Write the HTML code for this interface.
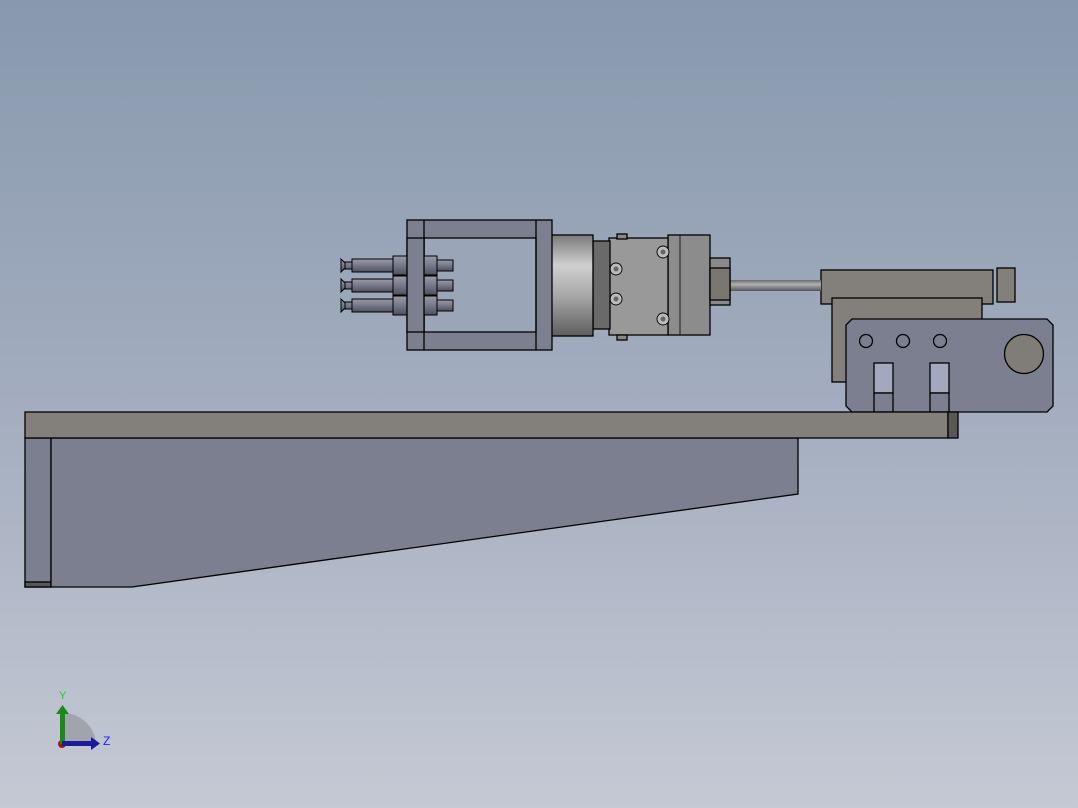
<!DOCTYPE html>
<html><head><style>
html,body{margin:0;padding:0;width:1078px;height:808px;overflow:hidden}
svg{display:block}
</style></head><body>
<svg width="1078" height="808" viewBox="0 0 1078 808" xmlns="http://www.w3.org/2000/svg">
<defs>
<linearGradient id="bg" x1="0" y1="0" x2="0" y2="1">
<stop offset="0" stop-color="#8899ad"/><stop offset="0.5" stop-color="#a3adbf"/><stop offset="1" stop-color="#c5c9d4"/>
</linearGradient>
<linearGradient id="cyl" x1="0" y1="0" x2="0" y2="1">
<stop offset="0" stop-color="#7a7a7a"/><stop offset="0.3" stop-color="#d0d0d0"/><stop offset="0.6" stop-color="#a8a8a8"/><stop offset="1" stop-color="#5e5e5e"/>
</linearGradient>
<linearGradient id="rod" x1="0" y1="0" x2="0" y2="1">
<stop offset="0" stop-color="#9a9aa8"/><stop offset="0.4" stop-color="#7d8090"/><stop offset="1" stop-color="#4e5060"/>
</linearGradient>
<linearGradient id="prod" x1="0" y1="0" x2="0" y2="1">
<stop offset="0" stop-color="#6a6a6a"/><stop offset="0.4" stop-color="#b0b0b0"/><stop offset="1" stop-color="#555"/>
</linearGradient>
</defs>
<rect width="1078" height="808" fill="url(#bg)"/>
<g stroke="#000" stroke-width="1.3">
<!-- base -->
<rect x="25" y="438" width="26" height="149" fill="#7b7f90"/>
<rect x="25" y="582" width="26" height="5" fill="#55575f"/>
<path d="M51 438 H798 V494 L132 587 H51 Z" fill="#7b7f90"/>
<!-- bracket back plates -->
<rect x="821" y="270" width="172" height="34" fill="#837f7a"/>
<rect x="997" y="268" width="18" height="34" fill="#837f7a"/>
<rect x="832" y="298" width="150" height="84" fill="#837f7a"/>
<path d="M852 319 H1047 L1053 325 V406 L1047 412 H852 L846 406 V325 Z" fill="#7b7f90"/>
<circle cx="866" cy="341" r="6.5" fill="#7b7f90"/>
<circle cx="903" cy="341" r="6.5" fill="#7b7f90"/>
<circle cx="940" cy="341" r="6.5" fill="#7b7f90"/>
<circle cx="1024" cy="354" r="19.5" fill="#807d77"/>
<rect x="874" y="363" width="19" height="30" fill="#a3a8bf"/>
<rect x="874" y="393" width="19" height="19" fill="#7b7f90"/>
<rect x="930" y="363" width="19" height="30" fill="#a3a8bf"/>
<rect x="930" y="393" width="19" height="19" fill="#7b7f90"/>
<!-- top plate -->
<rect x="25" y="412" width="923" height="26" fill="#837f7a"/>
<rect x="948" y="412" width="10" height="26" fill="#5a5855"/>
<!-- rod -->
<rect x="730" y="280" width="91" height="11" fill="url(#prod)" stroke="none"/>
<!-- end block -->
<rect x="668" y="235" width="42" height="100" fill="#8c8c8c"/>
<line x1="680" y1="235" x2="680" y2="335" stroke-width="0.8"/>
<rect x="710" y="258" width="20" height="47" fill="#8a8a8a"/>
<rect x="710" y="268" width="20" height="32" fill="#7a7670"/>
<!-- gripper -->
<rect x="609" y="238" width="59" height="97" fill="#999"/>
<rect x="617" y="234" width="10" height="5" fill="#888"/>
<rect x="617" y="335" width="10" height="5" fill="#888"/>
<g fill="#bbb" stroke-width="0.9">
<circle cx="616" cy="269" r="6"/><circle cx="616" cy="299" r="6"/>
<circle cx="663" cy="252" r="6"/><circle cx="663" cy="319" r="6"/>
</g>
<g fill="#666" stroke="none">
<circle cx="616" cy="269" r="2.5"/><circle cx="616" cy="299" r="2.5"/>
<circle cx="663" cy="252" r="2.5"/><circle cx="663" cy="319" r="2.5"/>
</g>
<!-- cylinder -->
<rect x="593" y="241" width="17" height="88" fill="#6a6a6a"/>
<rect x="548" y="235" width="45" height="101" fill="url(#cyl)"/>
<!-- frame -->
<rect x="407" y="220" width="145" height="130" fill="#7b7f90"/>
<rect x="424" y="238" width="112" height="94" fill="#9aa5b8"/>
<line x1="424" y1="220" x2="424" y2="350"/>
<line x1="536" y1="220" x2="536" y2="350"/>
<!-- suction rods -->
<g fill="url(#rod)" stroke-width="1">
<rect x="352" y="259" width="41" height="13"/><rect x="393" y="256" width="44" height="19"/><rect x="437" y="260" width="16" height="11"/>
<rect x="352" y="279" width="41" height="13"/><rect x="393" y="276" width="44" height="19"/><rect x="437" y="280" width="16" height="11"/>
<rect x="352" y="299" width="41" height="13"/><rect x="393" y="296" width="44" height="19"/><rect x="437" y="300" width="16" height="11"/>
<path d="M341 259 L345 263 V268 L341 272 Z M345 262 H352 V269 H345 Z"/>
<path d="M341 279 L345 283 V288 L341 292 Z M345 282 H352 V289 H345 Z"/>
<path d="M341 299 L345 303 V308 L341 312 Z M345 302 H352 V309 H345 Z"/>
</g>
<rect x="407" y="238" width="17" height="94" fill="#7b7f90"/>
</g>
<!-- triad -->
<path d="M63 743 V713 A33 33 0 0 1 96 743 Z" fill="#a0a4ad"/>
<circle cx="62" cy="744" r="4" fill="#a01818"/>
<rect x="60" y="712" width="5" height="32" fill="#1a8a1a"/>
<path d="M56 714 L62.5 705 L69 714 Z" fill="#1a8a1a"/>
<rect x="62" y="741" width="30" height="5" fill="#1c1c9a"/>
<path d="M91 737 L100 743.5 L91 750 Z" fill="#1c1c9a"/>
<text x="59" y="699" font-family="Liberation Sans, sans-serif" font-size="11" fill="#20d020">Y</text>
<text x="103" y="745" font-family="Liberation Sans, sans-serif" font-size="12" fill="#2020ff">Z</text>
</svg>
</body></html>
